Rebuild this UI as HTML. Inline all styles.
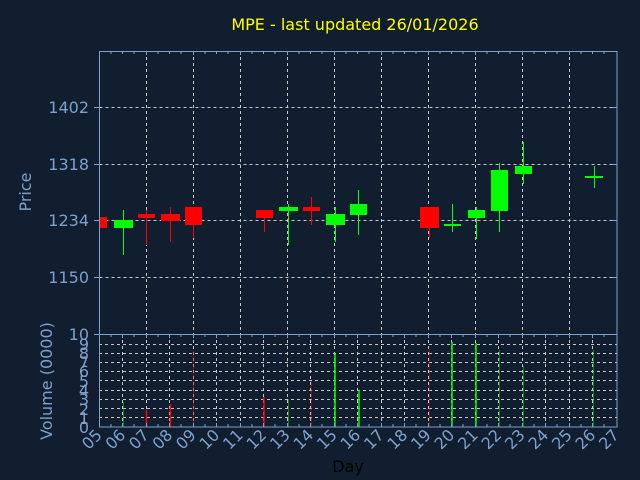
<!DOCTYPE html>
<html><head><style>
html,body{margin:0;padding:0;background:#101e2f;}
svg{display:block;font-family:"DejaVu Sans","Liberation Sans",sans-serif;}
</style></head><body>
<svg width="640" height="480" viewBox="0 0 640 480" xmlns="http://www.w3.org/2000/svg">
<rect width="640" height="480" fill="#101e2f"/>
<text x="355" y="30" fill="#ffff00" font-size="16" text-anchor="middle">MPE - last updated 26/01/2026</text>
<g stroke="#c8c8c8" stroke-width="1" stroke-dasharray="3,3" fill="none">
<path d="M99.5 107.5H617M99.5 164.5H617M99.5 220.5H617M99.5 277.5H617"/>
<path d="M146.5 51V334M193.5 51V334M240.5 51V334M287.5 51V334M334.5 51V334M381.5 51V334M428.5 51V334M475.5 51V334M522.5 51V334M569.5 51V334"/>
<path d="M99 344.5H617M99 353.5H617M99 362.5H617M99 371.5H617M99 380.5H617M99 390.5H617M99 399.5H617M99 408.5H617M99 417.5H617"/>
<path d="M122.5 334V427M146.5 334V427M169.5 334V427M193.5 334V427M216.5 334V427M240.5 334V427M263.5 334V427M287.5 334V427M310.5 334V427M334.5 334V427M357.5 334V427M381.5 334V427M404.5 334V427M428.5 334V427M451.5 334V427M475.5 334V427M498.5 334V427M522.5 334V427M545.5 334V427M569.5 334V427M592.5 334V427"/>
</g>
<g fill="#ff0000" stroke="#ff0000" stroke-width="1">
<rect x="99" y="217" width="8" height="11" stroke="none"/>
<path d="M146.5 210V245M170.5 207V242M193.5 207V238M264.5 218V232M311.5 197V225M429.5 207V238"/>
<rect x="138" y="214" width="17" height="4" stroke="none"/>
<rect x="161" y="214" width="19" height="7" stroke="none"/>
<rect x="185" y="207" width="17" height="18" stroke="none"/>
<rect x="256" y="210" width="17" height="8" stroke="none"/>
<rect x="303" y="207" width="17" height="4" stroke="none"/>
<rect x="420" y="207" width="19" height="21" stroke="none"/>
</g>
<g fill="#00ff00" stroke="#00ff00" stroke-width="1">
<path d="M123.5 210V255M288.5 204V245M335.5 207V242M358.5 190V235M452.5 204V232M476.5 207V239M499.5 163V232M523.5 142V184M594.5 166V188"/>
<rect x="114" y="220" width="19" height="8" stroke="none"/>
<rect x="279" y="207" width="19" height="4" stroke="none"/>
<rect x="326" y="214" width="19" height="11" stroke="none"/>
<rect x="350" y="204" width="17" height="11" stroke="none"/>
<rect x="444" y="224" width="17" height="2" stroke="none"/>
<rect x="468" y="210" width="17" height="8" stroke="none"/>
<rect x="491" y="170" width="17" height="41" stroke="none"/>
<rect x="515" y="166" width="17" height="8" stroke="none"/>
<rect x="585" y="176" width="18" height="2" stroke="none"/>
</g>
<g stroke-width="1.5">
<path stroke="#00ff00" d="M335 354V427M359 390V427M452 342V427M476 343V427"/>
<path stroke="#ff0000" d="M146.5 410V427M170.5 404V427M264 397V427"/>
</g>
<g stroke-width="1" opacity="0.45">
<path stroke="#00ff00" d="M123.5 402V427M288.5 399V427M499.5 350V427M523.5 366V427M593.5 350V427"/>
<path stroke="#ff0000" d="M193.5 351V427M311.5 381V427M429.5 349V427"/>
</g>
<g stroke="#7ea0cc" stroke-width="1" fill="none">
<rect x="99.5" y="51.5" width="517.5" height="375.5"/>
<path d="M99 334.5H617"/>
<path d="M94 107.5H99M94 164.5H99M94 220.5H99M94 277.5H99M94 334.5H99M612 107.5H617M612 164.5H617M612 220.5H617M612 277.5H617"/>
</g>
<g stroke="#7ea0cc" stroke-width="1">
<path d="M111 51V54M122.5 51V54M134 51V54M146.5 51V55M158 51V54M169.5 51V54M181 51V54M193.5 51V55M205 51V54M216.5 51V54M228 51V54M240.5 51V55M252 51V54M263.5 51V54M275 51V54M287.5 51V55M299 51V54M310.5 51V54M322 51V54M334.5 51V55M346 51V54M357.5 51V54M369 51V54M381.5 51V55M393 51V54M404.5 51V54M416 51V54M428.5 51V55M440 51V54M451.5 51V54M463 51V54M475.5 51V55M487 51V54M498.5 51V54M510 51V54M522.5 51V55M534 51V54M545.5 51V54M557 51V54M569.5 51V55M581 51V54M592.5 51V54M604 51V54"/>
<path d="M111 334V337M122.5 334V338M134 334V337M146.5 334V338M158 334V337M169.5 334V338M181 334V337M193.5 334V338M205 334V337M216.5 334V338M228 334V337M240.5 334V338M252 334V337M263.5 334V338M275 334V337M287.5 334V338M299 334V337M310.5 334V338M322 334V337M334.5 334V338M346 334V337M357.5 334V338M369 334V337M381.5 334V338M393 334V337M404.5 334V338M416 334V337M428.5 334V338M440 334V337M451.5 334V338M463 334V337M475.5 334V338M487 334V337M498.5 334V338M510 334V337M522.5 334V338M534 334V337M545.5 334V338M557 334V337M569.5 334V338M581 334V337M592.5 334V338M604 334V337"/>
<path d="M111 427V424M122.5 427V423M134 427V424M146.5 427V423M158 427V424M169.5 427V423M181 427V424M193.5 427V423M205 427V424M216.5 427V423M228 427V424M240.5 427V423M252 427V424M263.5 427V423M275 427V424M287.5 427V423M299 427V424M310.5 427V423M322 427V424M334.5 427V423M346 427V424M357.5 427V423M369 427V424M381.5 427V423M393 427V424M404.5 427V423M416 427V424M428.5 427V423M440 427V424M451.5 427V423M463 427V424M475.5 427V423M487 427V424M498.5 427V423M510 427V424M522.5 427V423M534 427V424M545.5 427V423M557 427V424M569.5 427V423M581 427V424M592.5 427V423M604 427V424"/>
</g>
<g fill="#7ea0cc" font-size="16" text-anchor="end">
<text x="89" y="113">1402</text>
<text x="89" y="170">1318</text>
<text x="89" y="226">1234</text>
<text x="89" y="283">1150</text>
<text x="89" y="340">10</text>
<text x="89" y="433">0</text><text x="89" y="424">1</text><text x="89" y="415">2</text><text x="89" y="405">3</text><text x="89" y="396">4</text><text x="89" y="387">5</text><text x="89" y="377">6</text><text x="89" y="368">7</text><text x="89" y="359">8</text><text x="89" y="350">9</text>
</g>
<text transform="translate(31 192) rotate(-90)" fill="#7ea0cc" font-size="16" text-anchor="middle">Price</text>
<text transform="translate(52 381) rotate(-90)" fill="#7ea0cc" font-size="16" text-anchor="middle">Volume (0000)</text>
<g fill="#7ea0cc" font-size="16" text-anchor="end">
<text transform="translate(103 436) rotate(-45)">05</text>
<text transform="translate(126.5 436) rotate(-45)">06</text>
<text transform="translate(150 436) rotate(-45)">07</text>
<text transform="translate(173.5 436) rotate(-45)">08</text>
<text transform="translate(197 436) rotate(-45)">09</text>
<text transform="translate(220.5 436) rotate(-45)">10</text>
<text transform="translate(244 436) rotate(-45)">11</text>
<text transform="translate(267.5 436) rotate(-45)">12</text>
<text transform="translate(291 436) rotate(-45)">13</text>
<text transform="translate(314.5 436) rotate(-45)">14</text>
<text transform="translate(338 436) rotate(-45)">15</text>
<text transform="translate(361.5 436) rotate(-45)">16</text>
<text transform="translate(385 436) rotate(-45)">17</text>
<text transform="translate(408.5 436) rotate(-45)">18</text>
<text transform="translate(432 436) rotate(-45)">19</text>
<text transform="translate(455.5 436) rotate(-45)">20</text>
<text transform="translate(479 436) rotate(-45)">21</text>
<text transform="translate(502.5 436) rotate(-45)">22</text>
<text transform="translate(526 436) rotate(-45)">23</text>
<text transform="translate(549.5 436) rotate(-45)">24</text>
<text transform="translate(573 436) rotate(-45)">25</text>
<text transform="translate(596.5 436) rotate(-45)">26</text>
<text transform="translate(620 436) rotate(-45)">27</text>
</g>
<text x="348" y="472" fill="#000000" font-size="16" text-anchor="middle">Day</text>
</svg>
</body></html>
